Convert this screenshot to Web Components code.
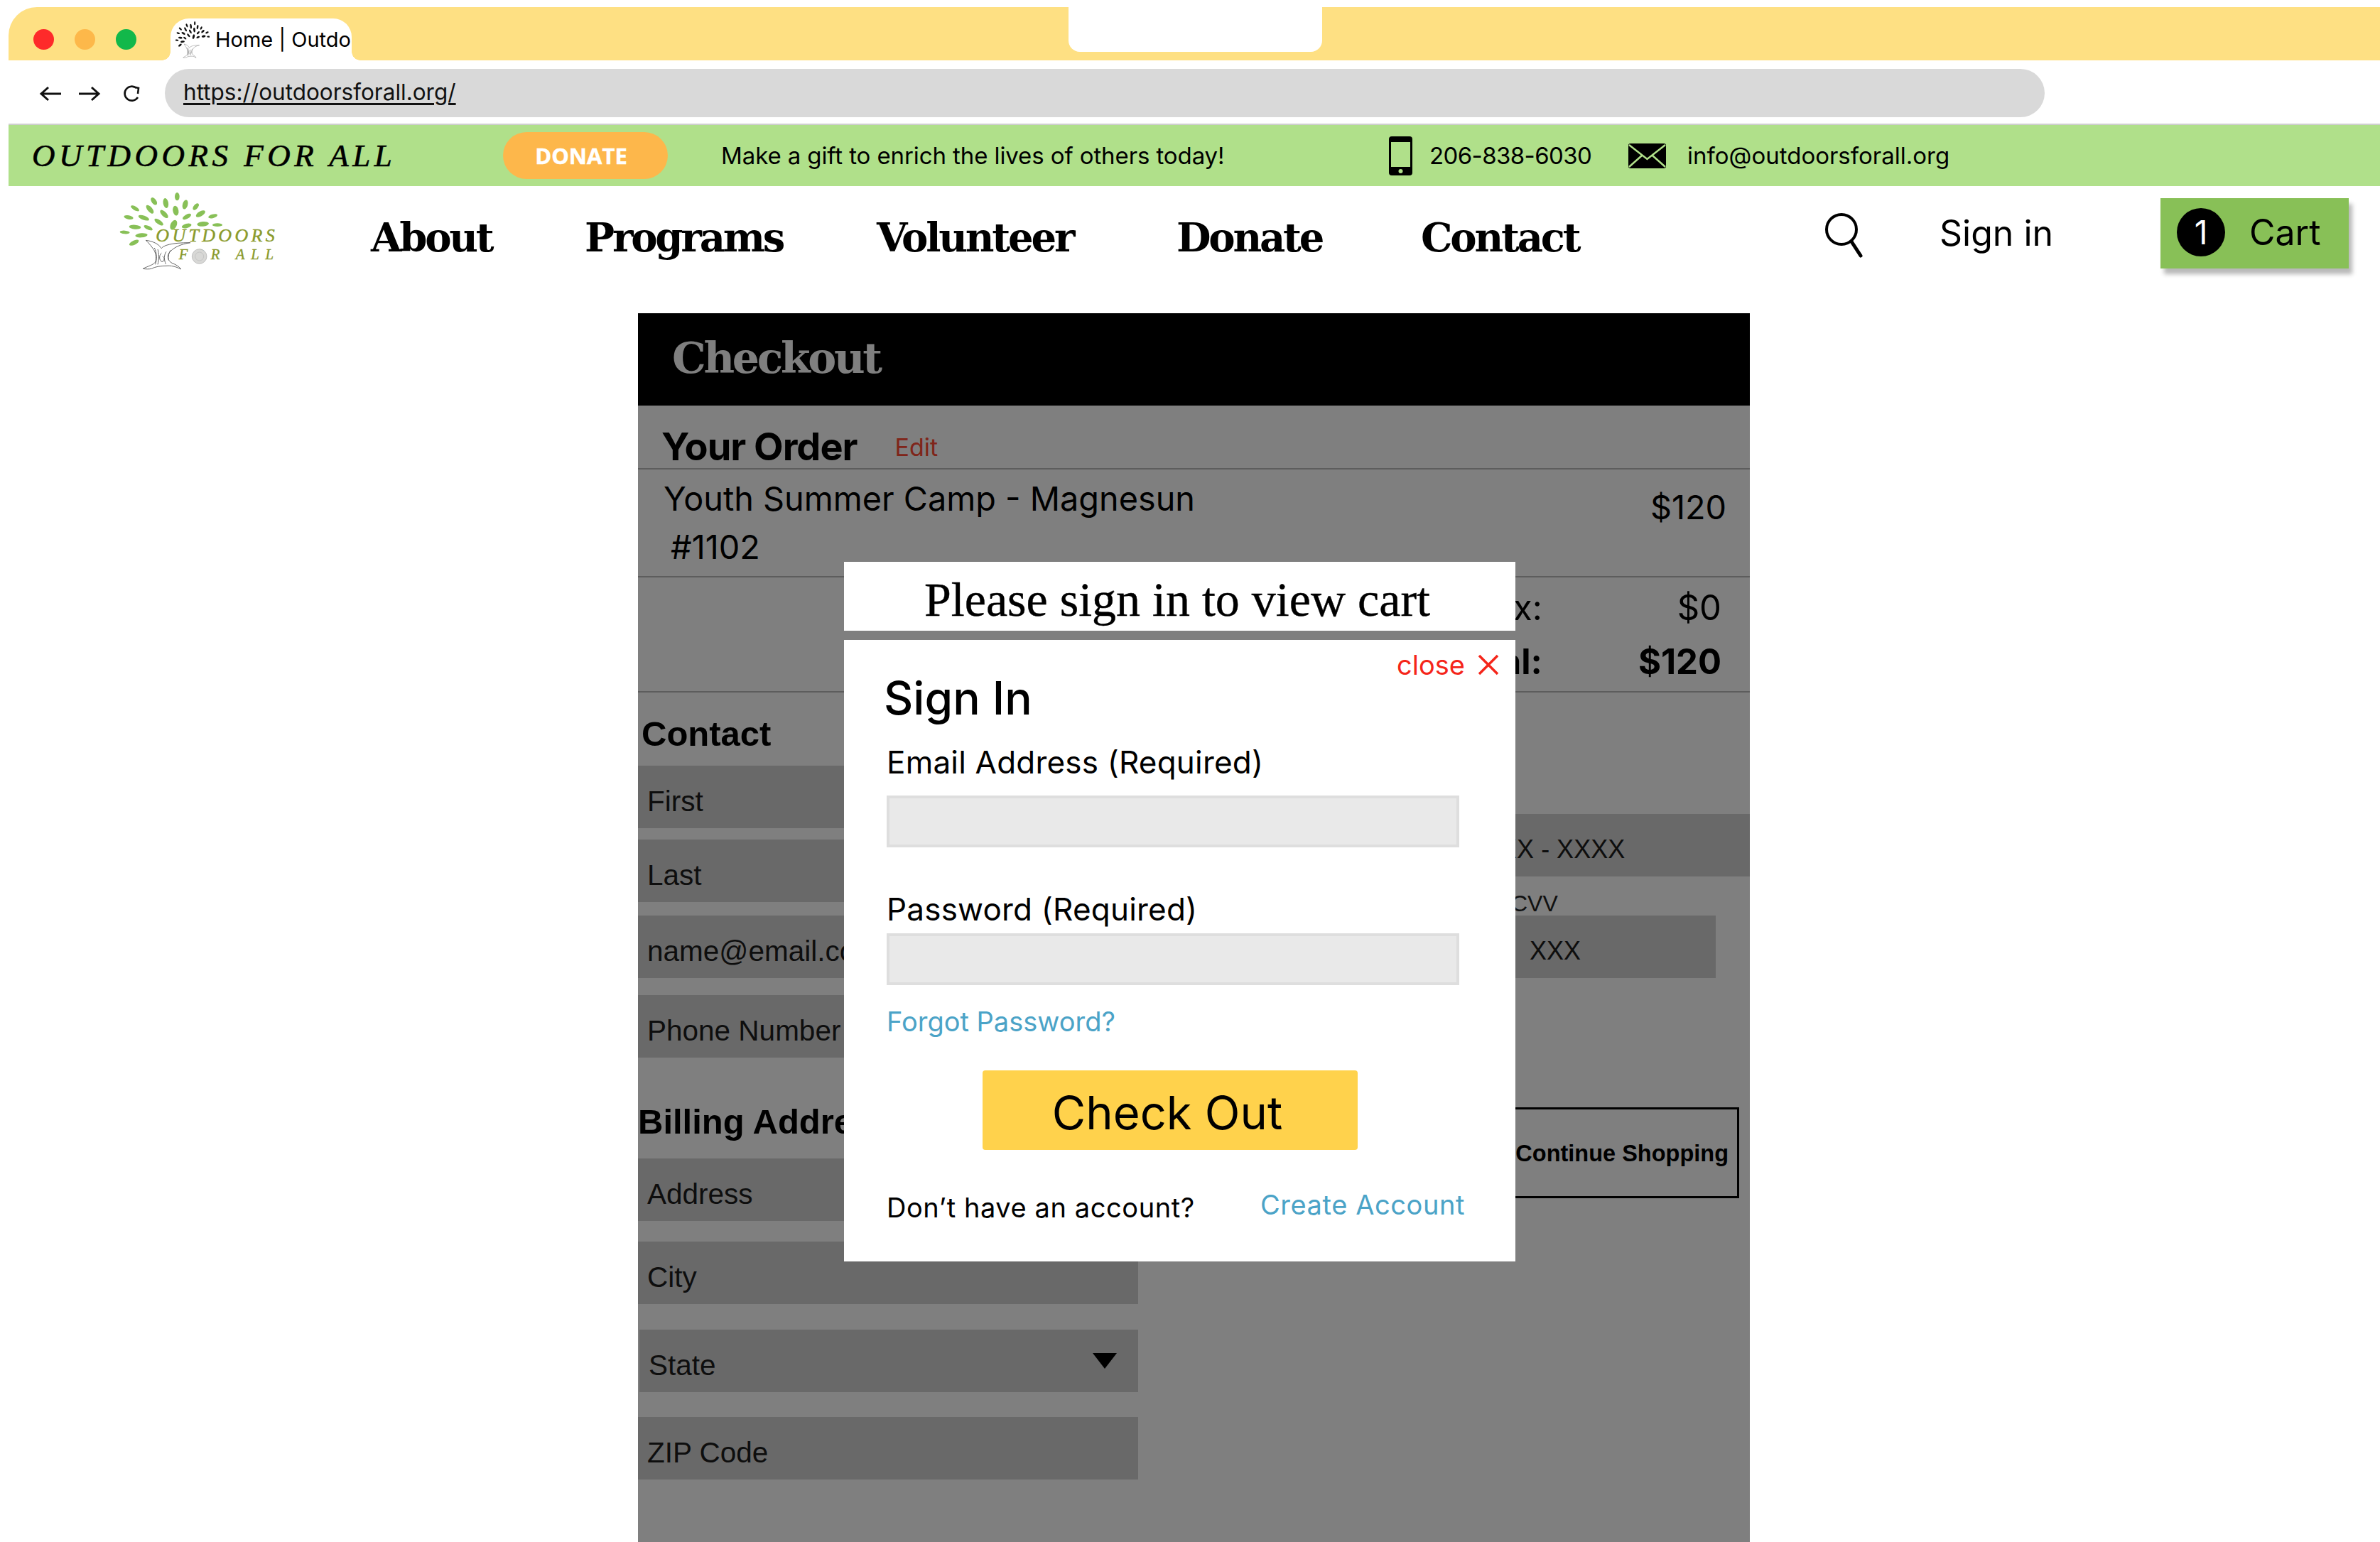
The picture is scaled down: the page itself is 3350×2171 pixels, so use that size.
<!DOCTYPE html>
<html lang="en">
<head>
<meta charset="utf-8">
<title>Home | Outdoors For All</title>
<style>
  html, body { margin: 0; height: 2171px; overflow: hidden; background: #fff; }
  body { padding-left: 12px; box-sizing: border-box; padding-top: 10px; font-family: Inter, "Liberation Sans", sans-serif; color: #000; }
</style>
</head>
<body>
<browser-chrome></browser-chrome>
<promo-bar></promo-bar>
<site-nav></site-nav>
<checkout-page></checkout-page>

<script>
const leaves = [[328,83,10,17,0],[230,103,10,18,-35],[280,111,11,21,-10],[362,117,11,20,15],[407,126,9,17,40],[150,133,8,20,-60],[213,137,10,22,-40],[322,143,12,21,-10],[273,157,10,22,-45],[427,156,10,22,60],[369,168,9,20,60],[123,171,8,20,-80],[187,173,9,24,-70],[479,166,8,20,75],[251,191,9,22,-55],[313,203,13,22,25],[437,199,10,25,85],[368,207,9,21,75],[498,203,7,21,90],[150,212,9,25,-85],[206,215,8,20,-65],[107,234,7,21,-85],[177,247,9,26,85],[146,278,9,22,65]];
const leafMarks = leaves.map(([x, y, rx, ry, a]) => `<ellipse cx="${x}" cy="${y}" rx="${rx}" ry="${ry}" transform="rotate(${a} ${x} ${y})"/>`).join('');
const trunkMarks = `
  <path d="M196 268c30 4 52 14 66 34 8-12 40-24 122-24-40 6-74 20-92 46-6 12-4 30 14 40 16 6 30 14 38 26-22-12-44-16-62-14-24 0-48 4-62 12-8 2-26 2-36 0 18-10 44-16 52-28 6-18 2-44-12-60-10-14-20-24-28-32z" fill="#fff" stroke="#666" stroke-width="3"/>
  <path d="M232 300c10 20 12 46 4 70M246 306c6 16 6 44 0 64M262 322c-12 8-10 34 2 36 12 0 12-20 2-22M282 316c-10 14-10 34-2 52M300 310c-8 12-10 26-8 42" fill="none" stroke="#666" stroke-width="3"/>`;

class TreeLogo extends HTMLElement {
  constructor() {
    super();
    this.attachShadow({ mode: 'open' });
  }
  connectedCallback() {
    this.shadowRoot.innerHTML = `
      <style>
        :host { display: block; align-self: start; width: 280px; height: 150px; margin: -13px 0 0 -28px; }
        svg { display: block; width: 100%; height: 100%; }
        text { fill: #8a9a2b; stroke: #8a9a2b; stroke-width: 1.2px; font-family: "Liberation Serif", serif; font-style: italic; }
      </style>
      <svg viewBox="0 0 840 450">
        <g fill="#88c057">${leafMarks}</g>
        ${trunkMarks}
        <text x="238" y="274" font-size="78" textLength="502">OUTDOORS</text>
        <text x="335" y="348" font-size="62" textLength="400">FOR ALL</text>
        <circle cx="422" cy="336" r="31" fill="#d8d8d6" stroke="#aaa" stroke-width="2"/>
        <circle cx="422" cy="336" r="18" fill="none" stroke="#bbb" stroke-width="2"/>
      </svg>`;
  }
}
customElements.define('tree-logo', TreeLogo);

class BrowserChrome extends HTMLElement {
  constructor() {
    super();
    this.attachShadow({ mode: 'open' });
  }
  connectedCallback() {
    this.shadowRoot.innerHTML = `
      <style>
        :host { display: block; font-family: Inter, "Liberation Sans", sans-serif; }
        .tabs { height: 75px; background: #fee083; border-radius: 40px 0 0 0; display: flex; align-items: flex-start; }
        .dots { display: flex; gap: 29px; padding: 31px 0 0 35px; width: 193px; box-sizing: border-box; }
        .dots i { width: 29px; height: 29px; border-radius: 50%; }
        .tab { margin: 16px 0 0 35px; width: 255px; height: 59px; background: #fff; border-radius: 26px 26px 0 0; display: flex; align-items: center; box-sizing: border-box; padding-left: 7px; font-size: 29px; white-space: nowrap; position: relative; }
        .tab::before, .tab::after { content: ''; position: absolute; bottom: 0; width: 12px; height: 12px; }
        .tab::before { left: -12px; background: radial-gradient(circle at 0 0, #fee083 11.5px, #fff 12px); }
        .tab::after { right: -12px; background: radial-gradient(circle at 100% 0, #fee083 11.5px, #fff 12px); }
        .tab svg { width: 48px; height: 54px; flex: none; margin-right: 8px; }
        .notch { margin-left: 1009px; width: 357px; height: 63px; background: #fff; border-radius: 0 0 16px 16px; }
        .bar { height: 89px; display: flex; align-items: center; }
        .nav { width: 220px; display: flex; }
        .url { width: 2646px; height: 68px; background: #d9d9d9; border-radius: 34px; box-sizing: border-box; padding-left: 26px; font-size: 31.5px; line-height: 66px; margin-top: 2px; }
        .url a { color: #111; text-decoration: underline; text-underline-offset: 4px; }
      </style>
      <div class="tabs">
        <div class="dots"><i style="background:#fe2a2a"></i><i style="background:#fdb84a"></i><i style="background:#12b84a"></i></div>
        <div class="tab">
          <svg viewBox="90 60 420 340" preserveAspectRatio="none"><g fill="#111">${leafMarks}</g>${trunkMarks}</svg>
          <span>Home | Outdo</span>
        </div>
        <div class="notch"></div>
      </div>
      <div class="bar">
        <svg class="nav" width="220" height="40" viewBox="0 0 220 40" fill="none" stroke="#111" stroke-width="3">
          <path d="M74 22H46M56 13l-10 9 10 9"/>
          <path d="M99 22h27M117 13l10 9-10 9"/>
          <path d="M180 14a10 10 0 1 0 2 13M175 12l8 2-1 8" stroke-width="2.6"/>
        </svg>
        <div class="url"><a>https://outdoorsforall.org/</a></div>
      </div>`;
  }
}
customElements.define('browser-chrome', BrowserChrome);

class PromoBar extends HTMLElement {
  constructor() {
    super();
    this.attachShadow({ mode: 'open' });
  }
  connectedCallback() {
    this.shadowRoot.innerHTML = `
      <style>
        :host { display: grid; grid-template-columns: 33px 663px 307px 940px 57px 280px 83px auto; align-items: center; height: 88px; background: #b0e08a; border-top: 2px solid #cfcfcf; font-family: Inter, "Liberation Sans", sans-serif; font-size: 33px; white-space: nowrap; box-sizing: border-box; }
        .brand { grid-column: 2; font-family: "Liberation Serif", serif; font-style: italic; font-size: 45px; letter-spacing: 5.5px; -webkit-text-stroke: .6px #000; }
        .donate { grid-column: 3; width: 232px; height: 66px; border-radius: 33px; background: #fdb74b; color: #fff; font: 700 31px "Open Sans", sans-serif; display: flex; align-items: center; justify-content: center; padding-right: 12px; box-sizing: border-box; -webkit-text-stroke: .5px #fff; }
        .gift { letter-spacing: -.1px; }
        .tel { letter-spacing: -.6px; }
        svg { display: block; }
      </style>
      <span class="brand">OUTDOORS FOR ALL</span>
      <span class="donate">DONATE</span>
      <span class="gift">Make a gift to enrich the lives of others today!</span>
      <svg width="33" height="55" viewBox="0 0 33 55"><rect width="33" height="55" rx="4"/><rect x="3" y="8" width="27" height="35" fill="#b0e08a"/><circle cx="16.500" cy="49" r="3" fill="#b0e08a"/></svg>
      <span class="tel">206-838-6030</span>
      <svg width="53" height="35" viewBox="0 0 53 35"><rect width="53" height="35" rx="3"/><path d="M1 2l25.500 20L52 2M1 33l18-16M52 33L34 17" fill="none" stroke="#b0e08a" stroke-width="2.500"/></svg>
      <span>info@outdoorsforall.org</span>`;
  }
}
customElements.define('promo-bar', PromoBar);

class SiteNav extends HTMLElement {
  constructor() {
    super();
    this.attachShadow({ mode: 'open' });
  }
  connectedCallback() {
    const links = ['About', 'Programs', 'Volunteer', 'Donate', 'Contact'];
    this.shadowRoot.innerHTML = `
      <style>
        :host { display: grid; grid-template-columns: 156px 354px 301px 411px 422px 344px 568px 162px 311px 265px; align-items: center; height: 179px; box-sizing: border-box; white-space: nowrap; font-family: Inter, "Liberation Sans", sans-serif; }
        .brand { grid-column: 2; }
        .link { font: 700 56px "DejaVu Serif", serif; letter-spacing: -3.2px; margin-top: -35px; }
        .search { margin-top: -41px; display: block; }
        .signin { font-size: 50px; margin-top: -47px; }
        .cart { width: 265px; height: 99px; margin-top: -47px; background: #88c057; box-shadow: 5px 8px 6px rgba(0,0,0,.28); display: flex; align-items: center; box-sizing: border-box; padding: 0 0 2px 23px; font-size: 50px; }
        .cart b { width: 68px; height: 68px; border-radius: 50%; background: #000; color: #fff; font: 400 46px/68px Inter, sans-serif; text-align: center; margin-right: 34px; flex: none; }
      </style>
      <tree-logo class="brand"></tree-logo>
      ${links.map((l) => `<span class="link">${l}</span>`).join('')}
      <svg class="search" width="56" height="66" viewBox="0 0 56 66" fill="none" stroke="#000"><circle cx="24" cy="25" r="21" stroke-width="4"/><path d="M38 42l13 20" stroke-width="5" stroke-linecap="round"/></svg>
      <span class="signin">Sign in</span>
      <div class="cart"><b>1</b><span>Cart</span></div>`;
  }
}
customElements.define('site-nav', SiteNav);

class CheckField extends HTMLElement {
  constructor() {
    super();
    this.attachShadow({ mode: 'open' });
  }
  connectedCallback() {
    this.shadowRoot.innerHTML = `
      <style>
        :host { display: flex; align-items: center; height: 88px; background: #d2d2d2; color: #1c1c1c; box-sizing: border-box; padding: 12px 0 0 13px; font-size: 40.5px; font-family: "Liberation Sans", sans-serif; white-space: nowrap; position: relative; }
        :host([select]) { margin-left: 2px; }
        :host([select])::after { content: ''; position: absolute; right: 30px; top: 33px; border: 17px solid transparent; border-top: 22px solid #000; border-bottom: 0; }
      </style>
      <slot></slot>`;
  }
}
customElements.define('check-field', CheckField);

class SignInModal extends HTMLElement {
  constructor() {
    super();
    this.attachShadow({ mode: 'open' });
  }
  connectedCallback() {
    this.shadowRoot.innerHTML = `
      <style>
        :host { display: flex; flex-direction: column; gap: 13px; position: absolute; left: 290px; top: 350px; width: 945px; font-family: Inter, "Liberation Sans", sans-serif; color: #000; }
        .title { height: 97px; background: #fff; font: 68px/106px "Liberation Serif", serif; padding-left: 113px; box-sizing: border-box; -webkit-text-stroke: .4px #000; }
        .box { height: 875px; background: #fff; box-sizing: border-box; padding: 0 60px; position: relative; }
        .close { position: absolute; right: 23px; top: 12px; display: flex; align-items: center; gap: 18px; color: #f5251a; font-size: 38px; }
        h2 { margin: 0; padding-top: 44px; margin-left: -4px; font-size: 64px; font-weight: 500; line-height: 76px; }
        label { display: block; font-size: 44px; line-height: 56px; letter-spacing: .2px; }
        .email { margin-top: 24px; }
        .pass { margin-top: 59px; }
        .input { width: 806px; height: 73px; background: #e9e9e9; border: 4px solid #dedede; box-sizing: border-box; margin-top: 19px; }
        .pass + .input { margin-top: 6px; }
        .forgot { color: #4ba3c7; font-size: 38px; line-height: 46px; margin-top: 28px; }
        .go { width: 528px; height: 112px; margin: 46px 0 0 135px; background: #ffd24c; border-radius: 4px; font-size: 65px; display: flex; align-items: center; justify-content: center; padding: 6px 8px 0 0; box-sizing: border-box; }
        .foot { display: flex; justify-content: space-between; width: 814px; font-size: 38px; line-height: 46px; margin-top: 58px; letter-spacing: .58px; }
        .foot a { color: #4ba3c7; margin-top: -4px; }
      </style>
      <div class="title">Please sign in to view cart</div>
      <div class="box">
        <div class="close"><span>close</span><svg width="30" height="30" viewBox="0 0 30 30" stroke="#f5251a" stroke-width="3.500"><path d="M2 2l26 26M28 2L2 28"/></svg></div>
        <h2>Sign In</h2>
        <label class="email">Email Address (Required)</label>
        <div class="input"></div>
        <label class="pass">Password (Required)</label>
        <div class="input"></div>
        <div class="forgot">Forgot Password?</div>
        <div class="go">Check Out</div>
        <div class="foot"><span>Don’t have an account?</span><a>Create Account</a></div>
      </div>`;
  }
}
customElements.define('sign-in-modal', SignInModal);

class CheckoutPage extends HTMLElement {
  constructor() {
    super();
    this.attachShadow({ mode: 'open' });
  }
  connectedCallback() {
    // gap = space above each field in the left column
    const contact = [['First', 0], ['Last', 16], ['name@email.com', 19], ['Phone Number', 24]];
    const billing = [['Address', 0], ['City', 29], ['State', 36, true], ['ZIP Code', 35]];
    const fields = (list) => list.map(([t, gap, sel]) => `<check-field ${sel ? 'select' : ''} style="margin-top:${gap}px">${t}</check-field>`).join('');
    this.shadowRoot.innerHTML = `
      <style>
        :host { display: block; position: relative; width: 1565px; height: 1730px; margin: 0 0 0 886px; background: #fff; overflow: hidden; font-family: Inter, "Liberation Sans", sans-serif; color: #000; }
        header { height: 130px; background: #000; color: #fff; font: 700 60px/126px "DejaVu Serif", serif; letter-spacing: -3.3px; padding-left: 48px; box-sizing: border-box; }
        .head { height: 90px; border-bottom: 2px solid #bbb; display: flex; align-items: flex-end; box-sizing: border-box; padding: 0 0 0 33px; }
        .head b { font-size: 54px; line-height: 62px; font-weight: 700; letter-spacing: -1px; position: relative; top: 1px; }
        .head a { color: #ff4a35; font-size: 34px; margin: 0 0 9px 53px; }
        .item { height: 152px; border-bottom: 2px solid #bbb; box-sizing: border-box; font-size: 46.8px; display: flex; justify-content: space-between; padding: 7px 33px 0 36px; line-height: 68px; }
        .item p { margin: 0; }
        .item p span { display: block; padding-left: 10px; }
        .item .price { padding-top: 12px; }
        .totals { height: 162px; border-bottom: 2px solid #bbb; box-sizing: border-box; display: grid; grid-template-columns: 1fr auto; justify-items: end; padding: 8px 40px 0 0; column-gap: 135px; font-size: 49px; line-height: 70px; }
        .totals b { font-weight: 700; }
        .cols { display: grid; grid-template-columns: 704px 1fr; column-gap: 58px; }
        h3 { margin: 0; font: 700 49px/60px "Liberation Sans", sans-serif; }
        .contact { padding: 28px 0 15px 5px; }
        .bill { padding: 60px 0 22px 0; }
        .right { padding-top: 171px; }
        .card { padding-left: 147px; font-size: 36px; }
        .cvv { font: 32px/40px "Liberation Sans", sans-serif; color: #222; padding: 18px 0 0 467px; margin-bottom: -3px; display: block; }
        .code { width: 755px; padding-left: 493px; font-size: 36px; }
        .cont { width: 788px; height: 128px; border: 3px solid #000; box-sizing: border-box; margin-top: 182px; font: 700 32.5px "Liberation Sans", sans-serif; display: flex; align-items: center; justify-content: flex-end; padding: 3px 12px 0 0; }
        .shade { position: absolute; inset: 0; background: rgba(0,0,0,.5); }
      </style>
      <header>Checkout</header>
      <div class="head"><b>Your Order</b><a>Edit</a></div>
      <div class="item"><p>Youth Summer Camp - Magnesun<span>#1102</span></p><span class="price">$120</span></div>
      <div class="totals"><span>Tax:</span><span>$0</span><b>Total:</b><b>$120</b></div>
      <div class="cols">
        <div>
          <h3 class="contact">Contact</h3>
          ${fields(contact)}
          <h3 class="bill">Billing Address</h3>
          ${fields(billing)}
        </div>
        <div class="right">
          <check-field class="card">XXXX - XXXX - XXXX - XXXX</check-field>
          <span class="cvv">CVV</span>
          <check-field class="code">XXX</check-field>
          <div class="cont">Continue Shopping</div>
        </div>
      </div>
      <div class="shade"></div>
      <sign-in-modal></sign-in-modal>`;
  }
}
customElements.define('checkout-page', CheckoutPage);
</script>
</body>
</html>
